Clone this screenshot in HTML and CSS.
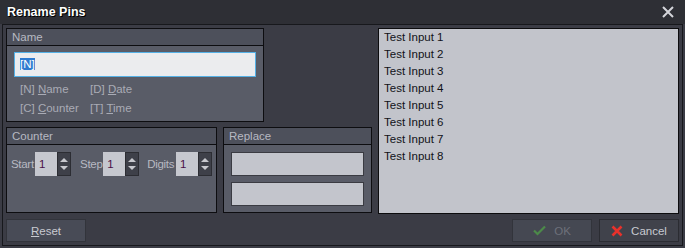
FILE: index.html
```html
<!DOCTYPE html>
<html lang="en">
<head>
  <meta charset="UTF-8" />
  <title>Rename Pins</title>
  <link rel="stylesheet" href="styles.css">
</head>
<body>
  <div class="window">
    <div class="titlebar">
      <span class="title">Rename Pins</span>
      <svg class="close" width="12" height="12" viewBox="0 0 12 12">
        <path d="M1 1 L11 11 M11 1 L1 11" stroke="#d4d5da" stroke-width="2" fill="none"/>
      </svg>
    </div>

    <div class="frame">
      <div class="top">
        <div class="left">
          <div class="group name-group">
            <div class="group-head">Name</div>
            <div class="group-body">
              <div class="name-input"><span class="sel">[N]</span></div>
              <div class="hints">
                <span>[N] <u>N</u>ame</span>
                <span>[D] <u>D</u>ate</span>
                <span>[C] <u>C</u>ounter</span>
                <span>[T] <u>T</u>ime</span>
              </div>
            </div>
          </div>

          <div class="bottom-row">
            <div class="group counter-group">
              <div class="group-head">Counter</div>
              <div class="group-body counter-body">
                <label class="lbl-start">Start</label>
                <div class="spin"><span class="spin-val">1</span><span class="spin-btn">
                  <svg width="10" height="14" viewBox="0 0 10 14"><path d="M5 1 L9 5 L1 5 Z M1 9 L9 9 L5 13 Z" fill="#c8c9cf"/></svg>
                </span></div>
                <label class="lbl-step">Step</label>
                <div class="spin"><span class="spin-val">1</span><span class="spin-btn">
                  <svg width="10" height="14" viewBox="0 0 10 14"><path d="M5 1 L9 5 L1 5 Z M1 9 L9 9 L5 13 Z" fill="#c8c9cf"/></svg>
                </span></div>
                <label class="lbl-digits">Digits</label>
                <div class="spin"><span class="spin-val">1</span><span class="spin-btn">
                  <svg width="10" height="14" viewBox="0 0 10 14"><path d="M5 1 L9 5 L1 5 Z M1 9 L9 9 L5 13 Z" fill="#c8c9cf"/></svg>
                </span></div>
              </div>
            </div>

            <div class="group replace-group">
              <div class="group-head">Replace</div>
              <div class="group-body replace-body">
                <div class="text-box"></div>
                <div class="text-box"></div>
              </div>
            </div>
          </div>
        </div>

        <div class="pin-list">
          <div>Test Input 1</div>
          <div>Test Input 2</div>
          <div>Test Input 3</div>
          <div>Test Input 4</div>
          <div>Test Input 5</div>
          <div>Test Input 6</div>
          <div>Test Input 7</div>
          <div>Test Input 8</div>
        </div>
      </div>

      <div class="buttons">
        <div class="btn reset-btn"><span><u>R</u>eset</span></div>
        <div class="right-btns">
          <div class="btn ok-btn">
            <svg width="13" height="11" viewBox="0 0 13 11"><path d="M1 5.5 L4.5 9 L12 1.5" stroke="#4c8a49" stroke-width="2.2" fill="none"/></svg>
            <span>OK</span>
          </div>
          <div class="btn cancel-btn">
            <svg width="12" height="12" viewBox="0 0 12 12"><path d="M1.5 1.5 L10.5 10.5 M10.5 1.5 L1.5 10.5" stroke="#e8312b" stroke-width="2.6" fill="none"/></svg>
            <span>Cancel</span>
          </div>
        </div>
      </div>
    </div>
  </div>
</body>
</html>
```

FILE: styles.css
```css
body {
  margin: 0;
  background-color: #3b3c45;
  font-family: "Liberation Sans", Arial, sans-serif;
  font-size: 11.5px;
}
.window {
  width: 685px;
  height: 248px;
  background-color: #3b3c45;
  overflow: hidden;
}
.titlebar {
  height: 24px;
  background-color: #2e2f35;
  display: flex;
  align-items: center;
  justify-content: space-between;
  padding: 0 11px 0 7px;
  box-sizing: border-box;
}
.title {
  color: #ffffff;
  font-weight: bold;
  font-size: 12.5px;
  text-shadow: 0 0 1px #000, 1px 1px 0 #000;
}
.frame {
  margin: 0 2px;
  height: 222px;
  border: 1px solid #17181c;
  box-sizing: border-box;
  padding: 3px;
  display: flex;
  flex-direction: column;
  gap: 5px;
}
.top {
  display: flex;
  gap: 6px;
  height: 186px;
}
.left {
  width: 366px;
  display: flex;
  flex-direction: column;
  align-items: flex-start;
  gap: 5px;
}
.group {
  border: 1px solid #0d0d10;
  background-color: #595c67;
  box-sizing: border-box;
  display: flex;
  flex-direction: column;
}
.group-head {
  height: 16px;
  line-height: 16px;
  background-color: #4d505b;
  border-bottom: 1px solid #0d0d10;
  color: #b7b9c2;
  padding-left: 5px;
}
.group-body {
  flex: 1;
  padding: 6px 7px;
}
.name-group {
  width: 258px;
  height: 94px;
}
.name-input {
  height: 25px;
  background-color: #ebecee;
  border: 1px solid #55b1e6;
  box-sizing: border-box;
  padding: 5px 5px;
  line-height: 13px;
}
.sel {
  background-color: #2f7bd0;
  color: #ffffff;
}
.hints {
  display: grid;
  grid-template-columns: 70px auto;
  row-gap: 5px;
  padding: 5px 0 0 6px;
  color: #a9abb5;
  line-height: 14px;
}
.bottom-row {
  display: flex;
  gap: 6px;
  height: 86px;
}
.counter-group {
  width: 211px;
}
.replace-group {
  width: 149px;
}
.counter-body {
  display: flex;
  align-items: flex-start;
  padding: 7px 4px;
}
.counter-body label {
  color: #b7b9c2;
  line-height: 24px;
  letter-spacing: -0.3px;
  white-space: nowrap;
}
.lbl-start {
  width: 25px;
}
.lbl-step {
  width: 24px;
  margin-left: 9px;
}
.lbl-digits {
  width: 30px;
  margin-left: 8px;
}
.spin {
  display: flex;
  height: 24px;
}
.spin-val {
  width: 22px;
  background-color: #c6c8cf;
  color: #4a1048;
  line-height: 24px;
  padding-left: 4px;
  box-sizing: border-box;
}
.spin-btn {
  width: 14px;
  background-color: #3e4049;
  border: 1px solid #2c2d33;
  box-sizing: border-box;
  display: flex;
  align-items: center;
  justify-content: center;
}
.replace-body {
  display: flex;
  flex-direction: column;
  gap: 6px;
  padding: 7px 7px;
}
.text-box {
  height: 24px;
  background-color: #c3c5cc;
  border: 1px solid #3a3b42;
  box-sizing: border-box;
}
.pin-list {
  width: 302px;
  border: 1px solid #0c0c0e;
  background-color: #c2c4cb;
  box-sizing: border-box;
  padding: 0 5px;
  color: #111218;
  line-height: 17px;
}
.buttons {
  display: flex;
  justify-content: space-between;
  height: 23px;
}
.right-btns {
  display: flex;
  gap: 7px;
}
.btn {
  width: 80px;
  height: 23px;
  box-sizing: border-box;
  border: 1px solid #32343b;
  background-color: #464852;
  display: flex;
  align-items: center;
  justify-content: center;
  gap: 8px;
  color: #c8cad1;
}
.reset-btn {
  background-color: #484b56;
}
.ok-btn {
  color: #6d707a;
  background-color: #454852;
}
.cancel-btn {
  background-color: #40424b;
  border-color: #2b2c32;
}
```
